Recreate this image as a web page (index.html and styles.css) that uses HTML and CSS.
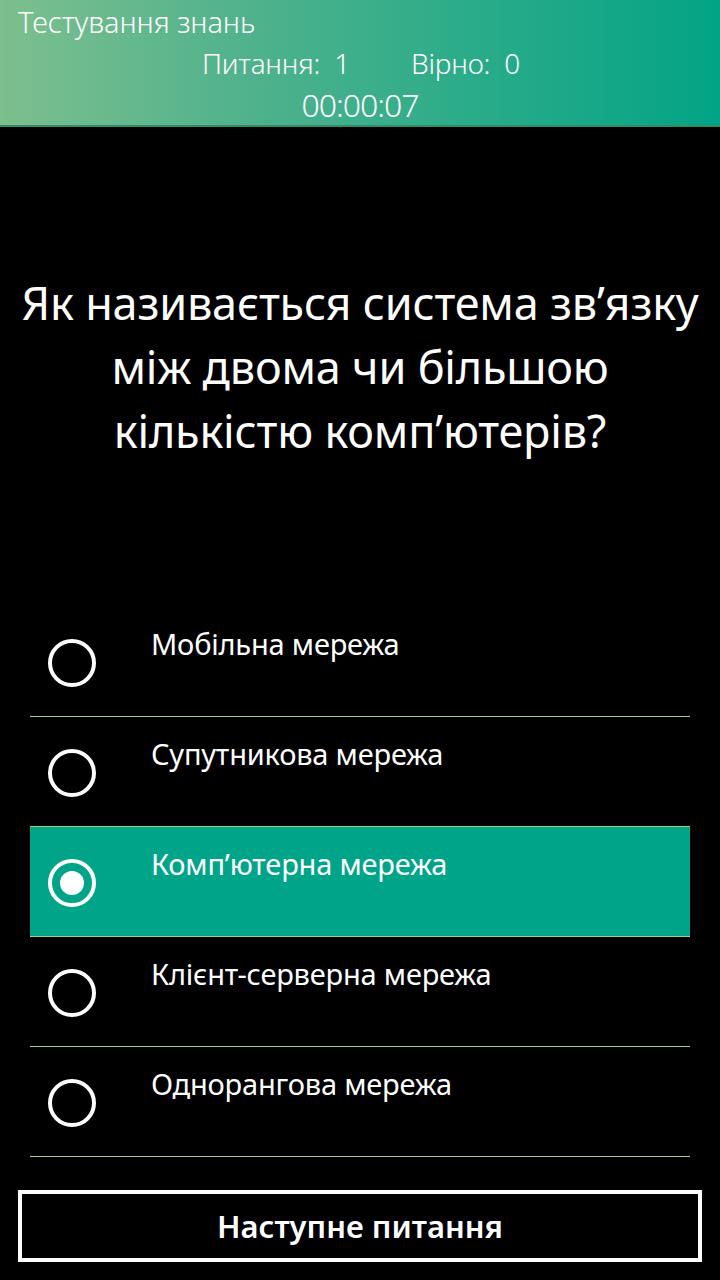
FILE: index.html
```html
<!DOCTYPE html>
<html lang="uk">
<head>
<meta charset="utf-8">
<link rel="stylesheet" href="styles.css">
</head>
<body>
<div class="app">
  <header class="header">
    <div class="app-title">Тестування знань</div>
    <div class="stats"><span>Питання:&nbsp; 1</span><span>Вірно:&nbsp; 0</span></div>
    <div class="timer">00:00:07</div>
  </header>
  <section class="question">
    <p>Як називається система зв’язку<br>між двома чи більшою<br>кількістю комп’ютерів?</p>
  </section>
  <ul class="options">
    <li class="option"><span class="radio"></span><span class="label">Мобільна мережа</span></li>
    <li class="option"><span class="radio"></span><span class="label">Супутникова мережа</span></li>
    <li class="option selected"><span class="radio"></span><span class="label">Комп’ютерна мережа</span></li>
    <li class="option"><span class="radio"></span><span class="label">Клієнт-серверна мережа</span></li>
    <li class="option"><span class="radio"></span><span class="label">Однорангова мережа</span></li>
  </ul>
  <div class="actions">
    <button class="next">Наступне питання</button>
  </div>
</div>
</body>
</html>
```

FILE: styles.css
```css
html, body {
  margin: 0;
  padding: 0;
  background: #000;
}
body {
  font-family: "Noto Sans", "Open Sans", sans-serif;
  color: #fff;
}
.app {
  width: 720px;
  height: 1280px;
  display: flex;
  flex-direction: column;
}
.header {
  height: 125px;
  background: linear-gradient(90deg, #7dbf8e 0%, #4fb28c 35%, #02a486 100%);
  border-bottom: 2px solid #2a8f6a;
  display: flex;
  flex-direction: column;
  font-weight: 300;
}
.app-title {
  font-size: 29px;
  line-height: 32px;
  padding: 6px 0 0 18px;
  letter-spacing: -0.1px;
}
.stats {
  display: flex;
  justify-content: center;
  gap: 61px;
  font-size: 28px;
  line-height: 32px;
  margin-top: 9px;
  padding-left: 2px;
  letter-spacing: -0.2px;
}
.timer {
  text-align: center;
  font-size: 32px;
  line-height: 38px;
  margin-top: 7px;
  letter-spacing: -1px;
}
.question {
  height: 480px;
  display: flex;
  align-items: center;
  justify-content: center;
}
.question p {
  margin: 0;
  text-align: center;
  font-size: 45px;
  line-height: 64px;
  letter-spacing: -0.2px;
}
.options {
  list-style: none;
  margin: 0 30px;
  padding: 0;
}
.option {
  height: 109px;
  border-bottom: 1px solid #a5cf82;
  display: flex;
  align-items: flex-start;
}
.option.selected {
  background: #00a589;
}
.radio {
  width: 40px;
  height: 40px;
  border: 4px solid #fff;
  border-radius: 50%;
  margin: 32px 0 0 18px;
  box-sizing: content-box;
  display: flex;
  align-items: center;
  justify-content: center;
  flex: none;
}
.selected .radio::after {
  content: "";
  width: 24px;
  height: 24px;
  border-radius: 50%;
  background: #fff;
}
.label {
  margin: 19px 0 0 55px;
  font-size: 29px;
  line-height: 36px;
  letter-spacing: -0.2px;
}
.actions {
  padding: 33px 18px 0;
}
.next {
  width: 100%;
  height: 72px;
  background: #000;
  border: 4px solid #fff;
  color: #fff;
  font-family: "Noto Sans", "Open Sans", sans-serif;
  font-size: 31px;
  font-weight: 600;
  letter-spacing: 0;
  padding: 0;
  display: block;
}
```
